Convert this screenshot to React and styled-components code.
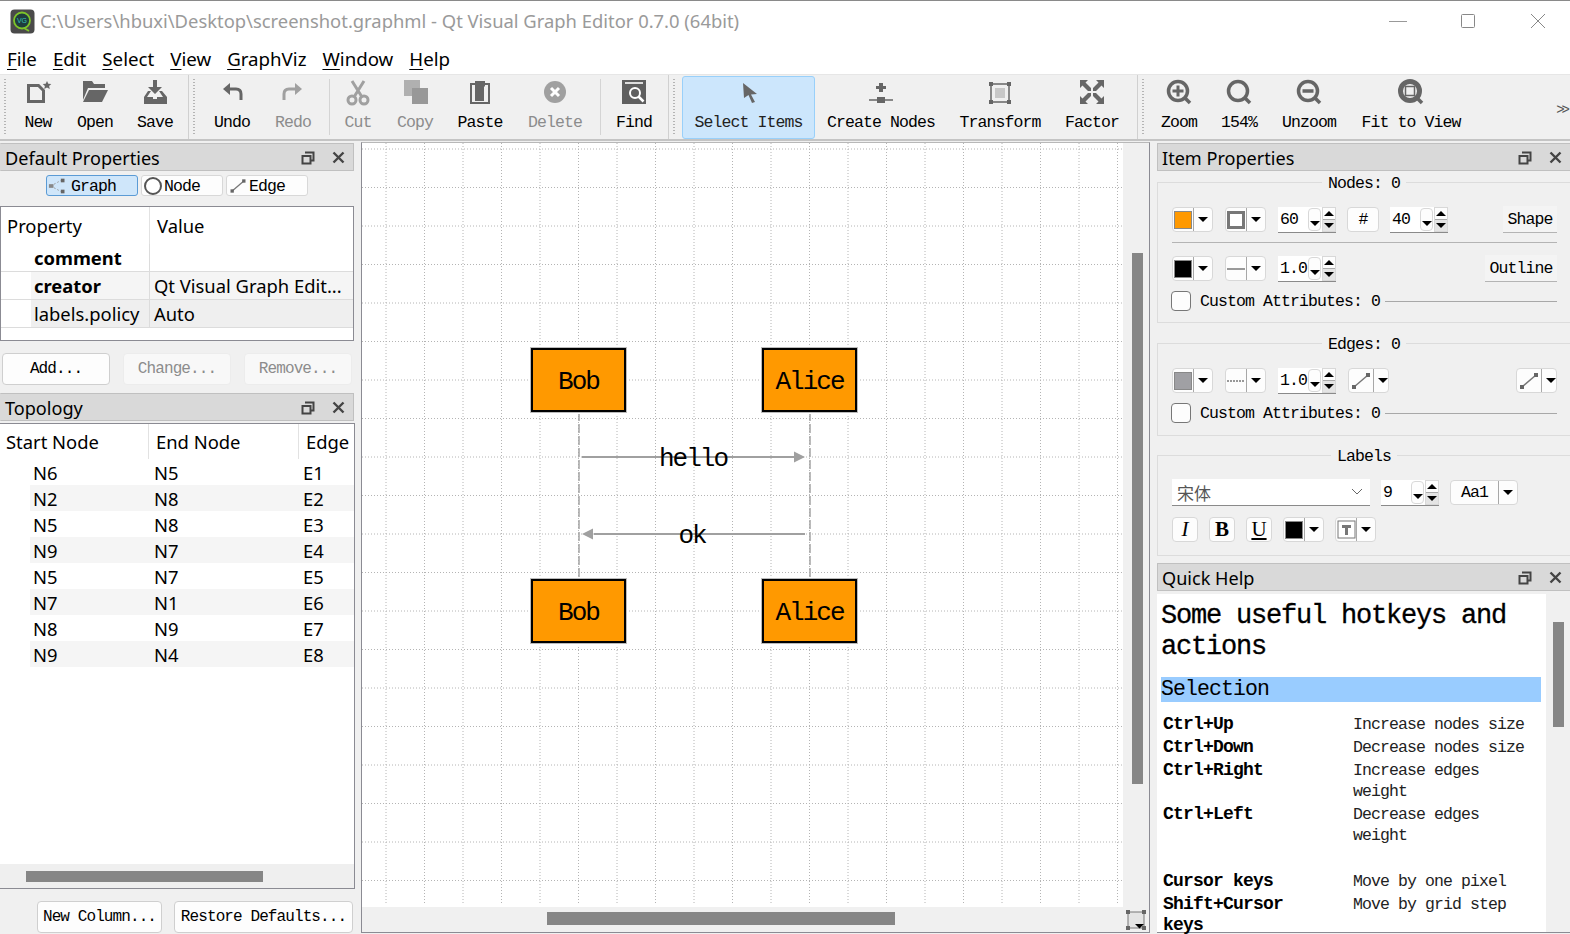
import React from 'react';
import styled, { createGlobalStyle, css } from 'styled-components';

const UI = `"Noto Sans", "Open Sans", sans-serif`;
const MONO = `"Liberation Mono", "Noto Sans CJK SC", monospace`;

// SimSun latin is taller and narrower than Liberation Mono, so size up and pull the advance back to 9px
const monoText = css`
    font-family: ${MONO};
    font-size: 16.5px;
    letter-spacing: -0.9px;
`;

const GlobalStyle = createGlobalStyle`
    html, body { margin: 0; padding: 0; background: #f0f0f0; }
    * { box-sizing: border-box; }
`;

const Window = styled.div`
    width: 1570px;
    height: 934px;
    overflow: hidden;
    background: #f0f0f0;
    font-family: ${UI};
    color: #000;
    display: flex;
    flex-direction: column;
`;

const TitleBar = styled.div`
    height: 42px;
    flex: none;
    margin-right: -3px;
    background: #fff;
    border-top: 1px solid #8a8a8a;
    display: flex;
    align-items: center;
    padding-left: 10px;
`;

const TitleText = styled.div`
    margin-left: 5px;
    font-size: 18.4px;
    color: #9a9a9a;
    white-space: nowrap;
    flex-grow: 1;
    margin-top: -2px;
`;

const WinButton = styled.div`
    width: 70px;
    display: flex;
    justify-content: center;
    margin-top: -2px;
`;

const MenuBar = styled.div`
    height: 32px;
    flex: none;
    background: #fff;
    display: flex;
    align-items: center;
    padding-left: 7px;
    gap: 16px;
    font-size: 18.7px;
`;

const MenuItem = styled.div`
    white-space: nowrap;
    & u { text-underline-offset: 3px; }
`;

const ToolBar = styled.div`
    height: 67px;
    flex: none;
    display: flex;
    background: #f0f0f0;
    border-top: 1px solid #e6e6e6;
    border-bottom: 2px solid #c4c4c4;
`;

const ToolGroup = styled.div`
    display: flex;
    height: 100%;
    width: ${p => p.$w}px;
    padding-left: ${p => p.$pad}px;
    position: relative;
    flex: none;
    border-right: ${p => (p.$last ? 'none' : '1px solid #d0d0d0')};
`;

const Handle = styled.div`
    position: absolute;
    left: ${p => p.$x}px;
    top: 4px;
    bottom: 4px;
    width: 2px;
    background: repeating-linear-gradient(to bottom, #b4b4b4 0 1px, transparent 1px 3px);
`;

const Tool = styled.div`
    width: ${p => p.$w}px;
    flex: none;
    display: flex;
    flex-direction: column;
    align-items: center;
    color: ${p => (p.$off ? '#8c8c8c' : '#000')};
    ${monoText}
    white-space: nowrap;
    padding-top: 3px;
    ${p => p.$active && `
        background: #cce6fc;
        border: 1px solid #99d0fa;
        border-radius: 3px;
        margin: 1px 0 0;
        height: 63px;
        padding-top: 1px;
        color: #222;
    `}
`;

const ToolLabel = styled.span`
    margin-top: 7px;
    line-height: 20px;
`;

const ToolSep = styled.div`
    width: 1px;
    flex: none;
    margin: 4px ${p => p.$r}px 4px ${p => p.$l}px;
    background: #d4d4d4;
`;

const More = styled.div`
    font-family: ${MONO};
    font-size: 14px;
    color: #555;
    margin-left: auto;
    margin-top: 27px;
    margin-right: 3px;
    letter-spacing: -3px;
`;

const Body = styled.div`
    flex: 1;
    display: flex;
    min-height: 0;
`;

const LeftDock = styled.div`
    width: 355px;
    flex: none;
    display: flex;
    flex-direction: column;
    padding-top: 2px;
`;

const DockHeader = styled.div`
    height: 28px;
    flex: none;
    background: #d9d9d9;
    border: 1px solid #c0c0c0;
    border-left-color: ${p => (p.$edge ? '#c0c0c0' : 'transparent')};
    display: flex;
    align-items: center;
    padding: 1px 0 0 4px;
    font-size: 18.1px;
    margin-top: ${p => p.$mt || 0}px;
    margin-right: ${p => (p.$edge ? -1 : 1)}px;
`;

const DockTitle = styled.span`
    flex-grow: 1;
`;

const DockIcon = styled.span`
    width: 30px;
    display: flex;
    justify-content: center;
`;

const Tabs = styled.div`
    display: flex;
    gap: 3px;
    padding-left: 46px;
    margin-top: 4px;
    height: 21px;
`;

const Tab = styled.div`
    width: ${p => p.$w}px;
    height: 21px;
    border: 1px solid ${p => (p.$on ? '#5b9bd5' : '#d8d8d8')};
    border-radius: 3px;
    background: ${p => (p.$on ? '#cfe6fa' : '#fdfdfd')};
    display: flex;
    align-items: center;
    ${monoText}
    padding: 2px 0 0 1px;
    gap: 1px;
    & > svg { margin-top: -2px; }
`;

const PropTable = styled.div`
    margin-top: 10px;
    height: 135px;
    width: 354px;
    background: #fff;
    border: 1px solid #8b8b93;
    font-size: 18.4px;
`;

const HeadRow = styled.div`
    height: ${p => p.$h}px;
    display: grid;
    grid-template-columns: ${p => p.$cols};
`;

const HeadCell = styled.div`
    padding-left: ${p => p.$pad}px;
    display: flex;
    align-items: center;
    white-space: nowrap;
    overflow: hidden;
    border-right: ${p => (p.$line ? '1px solid #e2e2e2' : 'none')};
`;

const PropRow = styled.div`
    height: 28px;
    display: grid;
    grid-template-columns: 30px 119px 1fr;
    border-bottom: 1px solid #dcdcdc;
`;

const PropCell = styled.div`
    display: flex;
    align-items: center;
    padding-left: ${p => p.$pad}px;
    background: ${p => p.$bg};
    font-weight: ${p => (p.$bold ? 700 : 400)};
    border-right: ${p => (p.$line ? '1px solid #dcdcdc' : 'none')};
    white-space: nowrap;
`;

const ButtonRow = styled.div`
    display: flex;
    gap: 13px;
    margin-top: 12px;
    padding-left: 2px;
`;

const PushButton = styled.div`
    width: ${p => p.$w}px;
    height: 32px;
    flex: none;
    border: 1px solid ${p => (p.$off ? '#ececec' : '#cfcfcf')};
    border-radius: 4px;
    background: ${p => (p.$off ? '#f8f8f8' : '#fdfdfd')};
    color: ${p => (p.$off ? '#8c8c8c' : '#000')};
    font-family: ${MONO};
    font-size: 16px;
    letter-spacing: -0.9px;
    display: flex;
    align-items: center;
    justify-content: center;
    white-space: nowrap;
`;

const TopoTable = styled.div`
    margin-top: 2px;
    height: 466px;
    width: 355px;
    background: #fff;
    border: 1px solid #8b8b93;
    border-left: none;
    display: flex;
    flex-direction: column;
    font-size: 18.4px;
`;

const TopoRows = styled.div`
    flex: 1;
`;

const TopoRow = styled.div`
    height: 26px;
    display: grid;
    grid-template-columns: 30px 119px 150px 1fr;
    align-items: center;
    background: ${p => (p.$alt ? 'linear-gradient(to right, #fff 30px, #f5f5f5 30px)' : '#fff')};
`;

const TopoCell = styled.div`
    padding-left: ${p => p.$pad}px;
`;

const HScrollTrack = styled.div`
    height: 24px;
    flex: none;
    background: #efefef;
    padding: 7px 0 6px ${p => p.$from}px;
`;

const HThumb = styled.div`
    height: 11px;
    width: ${p => p.$w}px;
    background: #868686;
`;

const BottomButtons = styled.div`
    display: flex;
    gap: 12px;
    margin-top: 12px;
    padding-left: 37px;
`;

const Center = styled.div`
    width: 789px;
    flex: none;
    margin: 1px 0 1px 6px;
    border: 1px solid #8b8b93;
    border-top-color: #b8b8b8;
    display: grid;
    grid-template-columns: 1fr 26px;
    grid-template-rows: 1fr 25px;
`;

const Canvas = styled.div`
    position: relative;
    background: #fff;
    overflow: hidden;
`;

const CanvasLines = styled.svg`
    position: absolute;
    left: 0;
    top: 0;
`;

const GraphNode = styled.div`
    position: absolute;
    left: ${p => p.$x}px;
    top: ${p => p.$y}px;
    width: 95px;
    height: 64px;
    background: #ff9900;
    border: 2px solid #000;
    box-shadow: 0 0 0 1px #bbb, 0 0 0 2px #fff;
    font-family: ${MONO};
    font-size: 26px;
    letter-spacing: -2px;
    padding-top: 3px;
    display: flex;
    align-items: center;
    justify-content: center;
`;

const EdgeLabel = styled.div`
    position: absolute;
    left: ${p => p.$x}px;
    top: ${p => p.$y}px;
    width: 120px;
    text-align: center;
    font-family: ${MONO};
    font-size: 26px;
    letter-spacing: -2px;
    line-height: 30px;
`;

const VTrack = styled.div`
    background: #f0f0f0;
    padding: 110px 0 0 9px;
`;

const VThumb = styled.div`
    width: 11px;
    height: ${p => p.$h}px;
    background: #868686;
`;

const HTrack = styled.div`
    background: #f0f0f0;
    padding: 5px 0 0 185px;
`;

const HThumb2 = styled.div`
    width: 348px;
    height: 13px;
    background: #868686;
`;

const Corner = styled.div`
    background: #f0f0f0;
    display: flex;
    align-items: center;
    justify-content: center;
`;

const RightDock = styled.div`
    width: 413px;
    flex: none;
    margin-left: 7px;
    padding-top: 2px;
    display: flex;
    flex-direction: column;
`;

const GroupBox = styled.div`
    height: ${p => p.$h}px;
    margin-top: ${p => p.$mt}px;
    flex: none;
    border: 1px solid #dcdcdc;
    border-right: none;
    padding: 0 13px 0 14px;
`;

const Legend = styled.div`
    width: fit-content;
    margin: -10px 0 0 ${p => p.$left}px;
    padding: 0 6px;
    height: 22px;
    line-height: 22px;
    background: #f0f0f0;
    ${monoText}
    white-space: nowrap;
`;

const Row = styled.div`
    display: flex;
    align-items: center;
    height: 25px;
    margin-top: ${p => p.$mt}px;
    gap: ${p => (p.$gap === undefined ? 12 : p.$gap)}px;
`;

const SplitRow = styled.div`
    flex: 1;
    display: flex;
    justify-content: space-between;
`;

const Combo = styled.div`
    width: ${p => p.$w || 41}px;
    height: 25px;
    flex: none;
    border: 1px solid #d8d8d8;
    border-radius: 4px;
    background: #fdfdfd;
    display: flex;
    align-items: center;
`;

const ComboFace = styled.div`
    flex: 1;
    height: 100%;
    border-right: 1px solid #a8a8a8;
    display: flex;
    align-items: center;
    justify-content: center;
    ${monoText}
`;

const ComboArrow = styled.div`
    width: 18px;
    flex: none;
    display: flex;
    justify-content: center;
`;

const Tri = styled.div`
    width: 0;
    height: 0;
    border-left: ${p => p.$s || 5.5}px solid transparent;
    border-right: ${p => p.$s || 5.5}px solid transparent;
    border-top: ${p => (p.$up ? 0 : (p.$s || 5.5))}px solid #000;
    border-bottom: ${p => (p.$up ? (p.$s || 5.5) : 0)}px solid #000;
`;

const Swatch = styled.div`
    width: 18px;
    height: 18px;
    background: ${p => p.$c};
    border: ${p => p.$bw || 1}px solid ${p => p.$line || '#888'};
`;

const Spin = styled.div`
    width: 58px;
    height: 26px;
    flex: none;
    background: #fff;
    border-bottom: 1px solid #8a8a8a;
    display: flex;
    align-items: center;
    padding-left: 2px;
    ${monoText}
    position: relative;
`;

const SpinText = styled.span`
    flex-grow: 1;
`;

const SpinDrop = styled.div`
    width: 13px;
    height: 23px;
    border: 1px solid #d8d8d8;
    border-radius: 4px;
    background: #fdfdfd;
    display: flex;
    align-items: flex-end;
    justify-content: center;
    padding-bottom: 4px;
`;

const SpinArrows = styled.div`
    width: 14px;
    height: 25px;
    margin-left: 1px;
    border: 1px solid #d8d8d8;
    display: flex;
    flex-direction: column;
`;

const SpinHalf = styled.div`
    flex: 1;
    display: flex;
    align-items: center;
    justify-content: center;
    background: ${p => p.$bg};
    border-top: ${p => (p.$line ? '1px solid #aaa' : 'none')};
`;

const MiniButton = styled.div`
    width: ${p => p.$w}px;
    height: 25px;
    flex: none;
    border: 1px solid #d8d8d8;
    border-radius: 4px;
    background: #fdfdfd;
    display: flex;
    align-items: center;
    justify-content: center;
    ${p => (p.$serif ? `font-family: "Liberation Serif", serif; font-size: ${p.$size}px;` : monoText)}
    font-weight: ${p => (p.$bold ? 700 : 400)};
    font-style: ${p => (p.$italic ? 'italic' : 'normal')};
    text-decoration: ${p => (p.$under ? 'underline' : 'none')};
`;

const FlatButton = styled.div`
    width: ${p => p.$w}px;
    height: 27px;
    margin-left: auto;
    flex: none;
    background: #f4f4f4;
    border-bottom: 1px solid #b4b4b4;
    display: flex;
    align-items: center;
    justify-content: center;
    ${monoText}
`;

const Divider = styled.div`
    height: 1px;
    background: #b4b4b4;
    margin-top: 10px;
`;

const CheckRow = styled.div`
    display: flex;
    align-items: center;
    height: 20px;
    margin-top: ${p => p.$mt}px;
    ${monoText}
    white-space: nowrap;
`;

const CheckBox = styled.div`
    width: 20px;
    height: 20px;
    flex: none;
    margin: 0 9px 0 -1px;
    border: 1px solid #777;
    border-radius: 4px;
    background: #fdfdfd;
`;

const CheckLine = styled.div`
    flex: 1;
    height: 1px;
    margin-left: 5px;
    background: #a8a8a8;
`;

const FontBox = styled.div`
    width: 198px;
    height: 27px;
    flex: none;
    background: #fff;
    border-bottom: 1px solid #8a8a8a;
    display: flex;
    align-items: center;
    justify-content: space-between;
    padding: 0 7px 0 5px;
    font-family: "Noto Sans CJK SC", sans-serif;
    font-size: 17px;
    color: #555;
`;

const HelpWrap = styled.div`
    flex: 1;
    min-height: 0;
    display: flex;
    margin-top: 3px;
    margin-bottom: 1px;
    border-bottom: 1px solid #8b8b93;
`;

const HelpBody = styled.div`
    width: 389px;
    flex: none;
    background: #fff;
    padding: 7px 5px 0 3px;
    font-family: ${MONO};
`;

const HelpTitle = styled.div`
    font-size: 27px;
    letter-spacing: -1.2px;
    line-height: 31px;
    padding-left: 1px;
    -webkit-text-stroke: 0.3px #000;
`;

const HelpSection = styled.div`
    margin-top: 14px;
    height: 25px;
    line-height: 25px;
    background: #99ccff;
    font-size: 21.5px;
    letter-spacing: -0.9px;
    margin-left: 1px;
`;

const HelpGrid = styled.div`
    margin-top: 11px;
    display: grid;
    grid-template-columns: 190px 1fr;
    padding-left: 3px;
`;

const HelpKey = styled.div`
    font-size: 18px;
    letter-spacing: -0.8px;
    font-weight: 700;
    line-height: 21px;
    padding: 1px 0 0;
    max-width: 160px;
    margin-top: ${p => p.$mt || 0}px;
`;

const HelpDesc = styled.div`
    font-size: 16.5px;
    letter-spacing: -0.9px;
    line-height: 21px;
    padding: 1px 0;
    margin-top: ${p => p.$mt || 0}px;
    color: #222;
`;

const HelpTrack = styled.div`
    flex: 1;
    padding: 28px 0 0 7px;
`;

const Icon = ({ size = 28, children }) => (
    <svg width={size} height={size} viewBox="0 0 28 28">{children}</svg>
);

const DARK = '#666';
const OFF = '#a0a0a0';

const NewIcon = () => <Icon>
    <path d="M4.5 7.5h10l5 5v11h-15z" fill="none" stroke={DARK} strokeWidth="3" />
    <path d="M23 3l1.3 2.8 3 .3-2.2 2 .7 3-2.8-1.6-2.8 1.6.7-3-2.2-2 3-.3z" fill={DARK} />
</Icon>;
const OpenIcon = () => <Icon>
    <path d="M2 3h9l2 3h11v4H7l-5 12z" fill={DARK} />
    <path d="M8 12h19l-6 12H2z" fill={DARK} />
</Icon>;
const SaveIcon = () => <Icon>
    <path d="M12 2h4v7h5l-7 7-7-7h5z" fill={DARK} />
    <path d="M7 13h3l-4 6h6v2h4v-2h6l-4-6h3l5 6v7H3v-7z" fill={DARK} />
</Icon>;
const UndoIcon = ({ c = DARK, flip }) => <Icon>
    <g transform={flip ? 'matrix(-1 0 0 1 28 0)' : undefined}>
        <path d="M5 11l7-6v12z" fill={c} />
        <path d="M10 11h8q5 0 5 5v6" fill="none" stroke={c} strokeWidth="3" />
    </g>
</Icon>;
const CutIcon = () => <Icon>
    <circle cx="8" cy="22" r="4" fill="none" stroke={OFF} strokeWidth="3" />
    <circle cx="20" cy="22" r="4" fill="none" stroke={OFF} strokeWidth="3" />
    <path d="M10 19L20 3M18 19L8 3" stroke={OFF} strokeWidth="3" />
</Icon>;
const CopyIcon = () => <Icon>
    <rect x="3" y="2" width="16" height="16" fill="#b0b0b0" />
    <rect x="11" y="10" width="16" height="16" fill="#989898" />
</Icon>;
const PasteIcon = () => <Icon>
    <rect x="5" y="6" width="18" height="19" fill="none" stroke={DARK} strokeWidth="2" />
    <path d="M9 3h10v5l-1 1v14H9z" fill={DARK} />
</Icon>;
const DeleteIcon = () => <Icon>
    <circle cx="14" cy="14" r="11" fill={OFF} />
    <path d="M10 10l8 8M18 10l-8 8" stroke="#fff" strokeWidth="3" />
</Icon>;
const FindIcon = () => <Icon>
    <rect x="2" y="2" width="24" height="24" fill="#5f5f5f" />
    <rect x="5" y="4" width="18" height="2" fill="#ddd" />
    <circle cx="15" cy="15" r="5" fill="none" stroke="#fff" strokeWidth="2" />
    <path d="M18.5 18.5l5 5" stroke="#fff" strokeWidth="2.5" />
</Icon>;
const SelectIcon = () => <Icon>
    <path d="M8 5l14 11-6 .5 4 7.5-3 1-3.5-8L9 20z" fill={DARK} />
</Icon>;
const CreateIcon = () => <Icon>
    <path d="M12 5h4v3h3v3h-3v3h-4v-3H9V8h3z" fill={DARK} />
    <path d="M2 22h24" stroke={DARK} strokeWidth="1.5" />
    <rect x="10" y="19" width="8" height="6" fill={DARK} />
</Icon>;
const TransformIcon = () => <Icon>
    <rect x="5" y="6" width="18" height="18" fill="none" stroke={DARK} strokeWidth="1.5" />
    <rect x="9" y="10" width="10" height="10" fill="#c8c8c8" />
    {[[3, 4], [21, 4], [3, 22], [21, 22]].map(([x, y]) => <rect key={x + '-' + y} x={x} y={y} width="4" height="4" fill={DARK} />)}
</Icon>;
const FactorIcon = () => <Icon>
    <g fill={DARK}>
        <path d="M2 2h8l-2.5 2.5L13 10v3h-3L4.500 7.500 2 10z" />
        <path d="M26 2h-8l2.5 2.5L15 10v3h3l5.500-5.500L26 10z" />
        <path d="M2 26h8l-2.5-2.5L13 18v-3h-3l-5.500 5.500L2 18z" />
        <path d="M26 26h-8l2.5-2.5L15 18v-3h3l5.500 5.500L26 18z" />
    </g>
</Icon>;
const ZoomIcon = ({ kind }) => <Icon>
    <circle cx="13" cy="13" r="9.5" fill="none" stroke={DARK} strokeWidth={kind === 'fit' ? 5 : 3.5} />
    <path d="M20 20l5 5" stroke={DARK} strokeWidth="3.5" />
    {kind === 'plus' && <path d="M7.5 13h11M13 7.5v11" stroke={DARK} strokeWidth="3" />}
    {kind === 'minus' && <path d="M7.5 13h11" stroke={DARK} strokeWidth="3.5" />}
    {kind === 'fit' && <rect x="8.5" y="8.5" width="9" height="9" fill="#f0f0f0" stroke={DARK} strokeWidth="1.5" />}
</Icon>;

const FloatIcon = () => <svg width="14" height="14" viewBox="0 0 14 14">
    <path d="M4 1.5h8.5v8H10M1.5 5h8v7.5h-8z" fill="none" stroke="#444" strokeWidth="2" />
</svg>;
const CloseIcon = () => <svg width="13" height="13" viewBox="0 0 13 13">
    <path d="M1.5 1.5l10 10M11.5 1.5l-10 10" stroke="#444" strokeWidth="2.4" />
</svg>;

const EdgeGlyph = ({ w = 24 }) => <svg width={w} height="20" viewBox="0 0 24 20">
    <path d="M5 16L19 4" stroke="#777" strokeWidth="1.5" />
    <rect x="3" y="14" width="4" height="4" fill="#666" />
    <rect x="17" y="2" width="4" height="4" fill="#666" />
</svg>;

const Logo = () => <svg width="25" height="25" viewBox="0 0 25 25">
    <rect x="0.5" y="0.5" width="24" height="24" rx="4" fill="#4a4a4a" />
    <circle cx="12" cy="11.5" r="8" fill="#1f3d3d" stroke="#7ec52a" strokeWidth="1.8" />
    <path d="M14 19l5 3" stroke="#7ec52a" strokeWidth="1.8" />
    <text x="12" y="14" textAnchor="middle" fontSize="7" fill="#35c4b5" fontFamily="Liberation Sans">VG</text>
</svg>;

const MENU = [['F', 'ile'], ['E', 'dit'], ['S', 'elect'], ['V', 'iew'], ['G', 'raphViz'], ['W', 'indow'], ['H', 'elp']];

const TOPOLOGY = [
    ['N6', 'N5', 'E1'], ['N2', 'N8', 'E2'], ['N5', 'N8', 'E3'], ['N9', 'N7', 'E4'],
    ['N5', 'N7', 'E5'], ['N7', 'N1', 'E6'], ['N8', 'N9', 'E7'], ['N9', 'N4', 'E8'],
];

const HELP = [
    ['Ctrl+Up', 'Increase nodes size'],
    ['Ctrl+Down', 'Decrease nodes size'],
    ['Ctrl+Right', 'Increase edges weight'],
    ['Ctrl+Left', 'Decrease edges weight'],
    ['Cursor keys', 'Move by one pixel', 23],
    ['Shift+Cursor keys', 'Move by grid step'],
];

const ComboBox = ({ w, children }) => <Combo $w={w}>
    <ComboFace>{children}</ComboFace>
    <ComboArrow><Tri /></ComboArrow>
</Combo>;

const SpinBox = ({ value }) => <Spin>
    <SpinText>{value}</SpinText>
    <SpinDrop><Tri $s={5} /></SpinDrop>
    <SpinArrows>
        <SpinHalf $bg="#fdfdfd"><Tri $up $s={5} /></SpinHalf>
        <SpinHalf $bg="#e4e4e4" $line><Tri $s={5} /></SpinHalf>
    </SpinArrows>
</Spin>;

const LineGlyph = ({ dash }) => <svg width="20" height="4" viewBox="0 0 20 4">
    <path d="M1 2h18" stroke="#999" strokeWidth="2" strokeDasharray={dash} />
</svg>;

const GridLines = () => {
    const xs = Array.from({ length: 20 }, (_, i) => 24 + i * 38.5);
    const ys = Array.from({ length: 20 }, (_, i) => 6 + i * 38.5);
    return <CanvasLines width="761" height="764">
        {xs.map(x => <line key={x} x1={x} x2={x} y1="0" y2="762" stroke="#b4b4b4" strokeDasharray="1 2" />)}
        {ys.map(y => <line key={y} y1={y} y2={y} x1="0" x2="761" stroke="#b4b4b4" strokeDasharray="1 2" />)}
        <g stroke="#a4a4a4" strokeWidth="1.5" strokeDasharray="9 3">
            <line x1="217" x2="217" y1="269" y2="436" />
            <line x1="448" x2="448" y1="269" y2="436" />
        </g>
        <g stroke="#a0a0a0" strokeWidth="2">
            <line x1="220" x2="434" y1="314" y2="314" />
            <line x1="232" x2="443" y1="391" y2="391" />
        </g>
        <path d="M432 308.5L443 314l-11 5.5z" fill="#a0a0a0" />
        <path d="M231 385.5L220 391l11 5.5z" fill="#a0a0a0" />
    </CanvasLines>;
};

const App = () => <Window>
    <GlobalStyle />
    <TitleBar>
        <Logo />
        <TitleText>C:\Users\hbuxi\Desktop\screenshot.graphml - Qt Visual Graph Editor 0.7.0 (64bit)</TitleText>
        <WinButton><svg width="20" height="14" viewBox="0 0 20 14"><path d="M1 7.5h18" stroke="#999" /></svg></WinButton>
        <WinButton><svg width="16" height="16" viewBox="0 0 16 16"><rect x="1.5" y="1.5" width="13" height="13" rx="1" fill="none" stroke="#888" /></svg></WinButton>
        <WinButton><svg width="16" height="16" viewBox="0 0 16 16"><path d="M1 1l14 14M15 1L1 15" stroke="#888" /></svg></WinButton>
    </TitleBar>
    <MenuBar>
        {MENU.map(([u, rest]) => <MenuItem key={u}><u>{u}</u>{rest}</MenuItem>)}
    </MenuBar>
    <ToolBar>
        <ToolGroup $w={189} $pad={10}>
            <Handle $x={4} />
            <Tool $w={56}><NewIcon /><ToolLabel>New</ToolLabel></Tool>
            <Tool $w={58}><OpenIcon /><ToolLabel>Open</ToolLabel></Tool>
            <Tool $w={62}><SaveIcon /><ToolLabel>Save</ToolLabel></Tool>
        </ToolGroup>
        <ToolGroup $w={480} $pad={11}>
            <Handle $x={4} />
            <Tool $w={64}><UndoIcon /><ToolLabel>Undo</ToolLabel></Tool>
            <Tool $w={58} $off><UndoIcon c={OFF} flip /><ToolLabel>Redo</ToolLabel></Tool>
            <ToolSep $l={7} $r={0} />
            <Tool $w={56} $off><CutIcon /><ToolLabel>Cut</ToolLabel></Tool>
            <Tool $w={58} $off><CopyIcon /><ToolLabel>Copy</ToolLabel></Tool>
            <Tool $w={72}><PasteIcon /><ToolLabel>Paste</ToolLabel></Tool>
            <Tool $w={78} $off><DeleteIcon /><ToolLabel>Delete</ToolLabel></Tool>
            <ToolSep $l={6} $r={0} />
            <Tool $w={66}><FindIcon /><ToolLabel>Find</ToolLabel></Tool>
        </ToolGroup>
        <ToolGroup $w={469} $pad={13}>
            <Handle $x={4} />
            <Tool $w={133} $active><SelectIcon /><ToolLabel>Select Items</ToolLabel></Tool>
            <Tool $w={132}><CreateIcon /><ToolLabel>Create Nodes</ToolLabel></Tool>
            <Tool $w={106}><TransformIcon /><ToolLabel>Transform</ToolLabel></Tool>
            <Tool $w={78}><FactorIcon /><ToolLabel>Factor</ToolLabel></Tool>
        </ToolGroup>
        <ToolGroup $w={432} $pad={11} $last>
            <Handle $x={4} />
            <Tool $w={60}><ZoomIcon kind="plus" /><ToolLabel>Zoom</ToolLabel></Tool>
            <Tool $w={60}><ZoomIcon /><ToolLabel>154%</ToolLabel></Tool>
            <Tool $w={80}><ZoomIcon kind="minus" /><ToolLabel>Unzoom</ToolLabel></Tool>
            <Tool $w={124}><ZoomIcon kind="fit" /><ToolLabel>Fit to View</ToolLabel></Tool>
            <More>&gt;&gt;</More>
        </ToolGroup>
    </ToolBar>
    <Body>
        <LeftDock>
            <DockHeader>
                <DockTitle>Default Properties</DockTitle>
                <DockIcon><FloatIcon /></DockIcon>
                <DockIcon><CloseIcon /></DockIcon>
            </DockHeader>
            <Tabs>
                <Tab $w={92} $on>
                    <svg width="22" height="18" viewBox="0 0 24 18">
                        <path d="M3 9l11-6M3 9l11 6" stroke="#999" strokeDasharray="2 2" />
                        <rect x="1" y="7" width="5" height="4" fill="#888" />
                        <rect x="14" y="1" width="4" height="4" fill="#666" />
                        <rect x="14" y="13" width="4" height="4" fill="#666" />
                    </svg>
                    Graph
                </Tab>
                <Tab $w={82}>
                    <svg width="20" height="20" viewBox="0 0 20 20"><circle cx="10" cy="10" r="8" fill="#fff" stroke="#555" strokeWidth="2" /></svg>
                    Node
                </Tab>
                <Tab $w={82}><EdgeGlyph w={20} />Edge</Tab>
            </Tabs>
            <PropTable>
                <HeadRow $h={37} $cols="149px 1fr">
                    <HeadCell $pad={6} $line>Property</HeadCell>
                    <HeadCell $pad={7}>Value</HeadCell>
                </HeadRow>
                <PropRow>
                    <PropCell $bg="#fff" />
                    <PropCell $bg="#fff" $pad={3} $bold $line>comment</PropCell>
                    <PropCell $bg="#fff" />
                </PropRow>
                <PropRow>
                    <PropCell $bg="#fff" />
                    <PropCell $bg="#f5f5f5" $pad={3} $bold $line>creator</PropCell>
                    <PropCell $bg="#f5f5f5" $pad={4}>Qt Visual Graph Edit...</PropCell>
                </PropRow>
                <PropRow>
                    <PropCell $bg="#fff" />
                    <PropCell $bg="#efefef" $pad={3} $line>labels.policy</PropCell>
                    <PropCell $bg="#efefef" $pad={4}>Auto</PropCell>
                </PropRow>
            </PropTable>
            <ButtonRow>
                <PushButton $w={108}>Add...</PushButton>
                <PushButton $w={108} $off>Change...</PushButton>
                <PushButton $w={108} $off>Remove...</PushButton>
            </ButtonRow>
            <DockHeader $mt={8}>
                <DockTitle>Topology</DockTitle>
                <DockIcon><FloatIcon /></DockIcon>
                <DockIcon><CloseIcon /></DockIcon>
            </DockHeader>
            <TopoTable>
                <HeadRow $h={35} $cols="149px 150px 1fr">
                    <HeadCell $pad={6} $line>Start Node</HeadCell>
                    <HeadCell $pad={7} $line>End Node</HeadCell>
                    <HeadCell $pad={7}>Edge</HeadCell>
                </HeadRow>
                <TopoRows>
                    {TOPOLOGY.map((r, i) => <TopoRow key={r[2]} $alt={i % 2 === 1}>
                        <span />
                        <TopoCell $pad={3}>{r[0]}</TopoCell>
                        <TopoCell $pad={5}>{r[1]}</TopoCell>
                        <TopoCell $pad={4}>{r[2]}</TopoCell>
                    </TopoRow>)}
                </TopoRows>
                <HScrollTrack $from={26}><HThumb $w={237} /></HScrollTrack>
            </TopoTable>
            <BottomButtons>
                <PushButton $w={125}>New Column...</PushButton>
                <PushButton $w={179}>Restore Defaults...</PushButton>
            </BottomButtons>
        </LeftDock>
        <Center>
            <Canvas>
                <GridLines />
                <GraphNode $x={169} $y={205}>Bob</GraphNode>
                <GraphNode $x={400} $y={205}>Alice</GraphNode>
                <GraphNode $x={169} $y={436}>Bob</GraphNode>
                <GraphNode $x={400} $y={436}>Alice</GraphNode>
                <EdgeLabel $x={271} $y={301}>hello</EdgeLabel>
                <EdgeLabel $x={270} $y={378}>ok</EdgeLabel>
            </Canvas>
            <VTrack><VThumb $h={531} /></VTrack>
            <HTrack><HThumb2 /></HTrack>
            <Corner>
                <svg width="22" height="22" viewBox="0 0 22 22">
                    <rect x="3" y="3" width="16" height="16" fill="#e4e4e4" stroke="#777" />
                    {[[1, 1], [17, 1], [1, 17], [17, 17]].map(([x, y]) => <rect key={x + '-' + y} x={x} y={y} width="4" height="4" fill="#666" />)}
                    <path d="M10 15h9l-4.5 4.5z" fill="#000" />
                </svg>
            </Corner>
        </Center>
        <RightDock>
            <DockHeader $edge>
                <DockTitle>Item Properties</DockTitle>
                <DockIcon><FloatIcon /></DockIcon>
                <DockIcon><CloseIcon /></DockIcon>
            </DockHeader>
            <GroupBox $h={141} $mt={11}>
                <Legend $left={150}>Nodes: 0</Legend>
                <Row $mt={12}>
                    <ComboBox><Swatch $c="#ff9900" /></ComboBox>
                    <ComboBox><Swatch $c="#fff" $line="#777" $bw={3} /></ComboBox>
                    <Row $mt={0} $gap={11}>
                        <SpinBox value="60" />
                        <MiniButton $w={32}>#</MiniButton>
                        <SpinBox value="40" />
                    </Row>
                    <FlatButton $w={54}>Shape</FlatButton>
                </Row>
                <Divider />
                <Row $mt={13}>
                    <ComboBox><Swatch $c="#000" /></ComboBox>
                    <ComboBox><LineGlyph /></ComboBox>
                    <SpinBox value="1.0" />
                    <FlatButton $w={72}>Outline</FlatButton>
                </Row>
                <CheckRow $mt={10}>
                    <CheckBox />Custom Attributes: 0<CheckLine />
                </CheckRow>
            </GroupBox>
            <GroupBox $h={93} $mt={20}>
                <Legend $left={150}>Edges: 0</Legend>
                <Row $mt={12}>
                    <ComboBox><Swatch $c="#a0a0a4" /></ComboBox>
                    <ComboBox><LineGlyph dash="2 1" /></ComboBox>
                    <SpinBox value="1.0" />
                    <SplitRow>
                        <ComboBox><EdgeGlyph /></ComboBox>
                        <ComboBox><EdgeGlyph /></ComboBox>
                    </SplitRow>
                </Row>
                <CheckRow $mt={10}>
                    <CheckBox />Custom Attributes: 0<CheckLine />
                </CheckRow>
            </GroupBox>
            <GroupBox $h={101} $mt={19}>
                <Legend $left={159}>Labels</Legend>
                <Row $mt={12} $gap={11}>
                    <FontBox>
                        宋体
                        <svg width="12" height="8" viewBox="0 0 12 8"><path d="M1 1l5 5 5-5" fill="none" stroke="#666" /></svg>
                    </FontBox>
                    <SpinBox value="9" />
                    <ComboBox w={68}>Aa1</ComboBox>
                </Row>
                <Row $mt={12} $gap={11}>
                    <MiniButton $w={26} $serif $italic $size={21}>I</MiniButton>
                    <MiniButton $w={26} $serif $bold $size={21}>B</MiniButton>
                    <MiniButton $w={26} $serif $under $size={21}>U</MiniButton>
                    <ComboBox><Swatch $c="#000" /></ComboBox>
                    <ComboBox>
                        <svg width="19" height="19" viewBox="0 0 19 19">
                            <rect x="1" y="1" width="17" height="17" fill="#fff" stroke="#777" />
                            <path d="M5 5h9v3h-3v7H8V8H5z" fill="#777" />
                        </svg>
                    </ComboBox>
                </Row>
            </GroupBox>
            <DockHeader $edge $mt={7}>
                <DockTitle>Quick Help</DockTitle>
                <DockIcon><FloatIcon /></DockIcon>
                <DockIcon><CloseIcon /></DockIcon>
            </DockHeader>
            <HelpWrap>
                <HelpBody>
                    <HelpTitle>Some useful hotkeys and actions</HelpTitle>
                    <HelpSection>Selection</HelpSection>
                    <HelpGrid>
                        {HELP.map(([k, d, mt]) => <React.Fragment key={k}>
                            <HelpKey $mt={mt}>{k}</HelpKey>
                            <HelpDesc $mt={mt}>{d}</HelpDesc>
                        </React.Fragment>)}
                    </HelpGrid>
                </HelpBody>
                <HelpTrack><VThumb $h={105} /></HelpTrack>
            </HelpWrap>
        </RightDock>
    </Body>
</Window>;

export default App;
